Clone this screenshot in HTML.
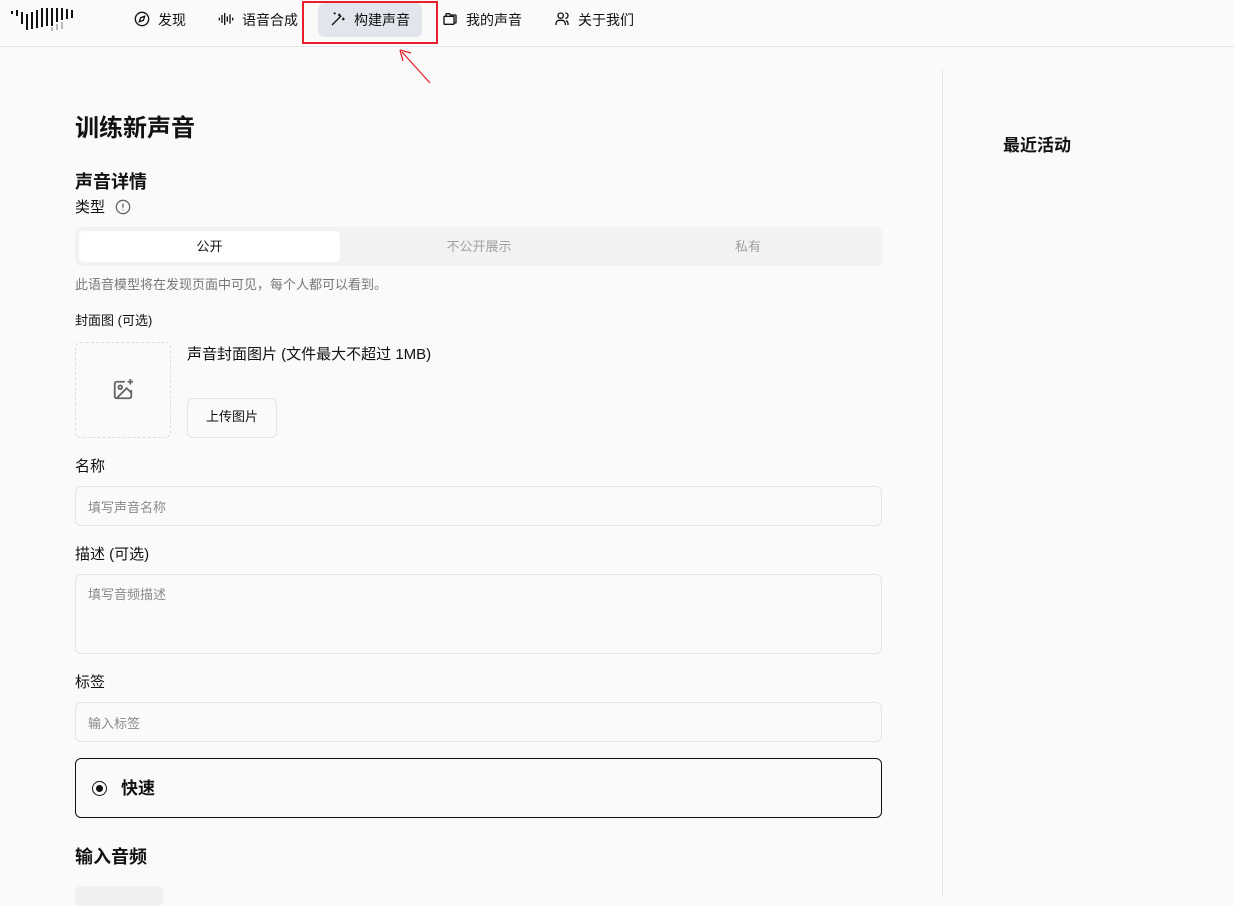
<!DOCTYPE html>
<html><head><meta charset="utf-8"><style>
*{box-sizing:border-box;margin:0;padding:0}
body{width:1234px;height:897px;overflow:hidden;background:#fafafa;font-family:"Liberation Sans","Noto Sans CJK SC",sans-serif;color:#111;position:relative}
.a{position:absolute;white-space:nowrap}
.hdr{position:absolute;left:0;top:0;width:1234px;height:47px;border-bottom:1px solid #e5e5e5;background:#fafafa}
.nav{font-size:14px;top:10px}
.inp{position:absolute;left:75px;width:807px;border:1px solid #e4e4e7;border-radius:6px;background:#fafafa;font-size:13px;color:#8a8a8a;padding:10px 12px}
svg.ic{position:absolute}
</style></head><body>
<div class="hdr"></div>
<svg class="ic" style="left:10px;top:6px" width="68" height="26" viewBox="0 0 68 26">
<g stroke="#111" stroke-width="2">
<line x1="2" y1="5" x2="2" y2="8"/><line x1="7" y1="4" x2="7" y2="10"/><line x1="12" y1="6" x2="12" y2="18"/><line x1="17" y1="8" x2="17" y2="24"/><line x1="22" y1="6" x2="22" y2="23"/><line x1="27" y1="4" x2="27" y2="22"/><line x1="32" y1="2" x2="32" y2="21"/><line x1="37" y1="2" x2="37" y2="20"/><line x1="42" y1="2" x2="42" y2="20"/><line x1="47" y1="2" x2="47" y2="16"/><line x1="52" y1="2" x2="52" y2="14"/><line x1="57" y1="3" x2="57" y2="13"/><line x1="62" y1="4" x2="62" y2="12"/></g>
<g stroke="#bbb" stroke-width="2"><line x1="42" y1="21" x2="42" y2="25"/><line x1="47" y1="18" x2="47" y2="24"/><line x1="52" y1="16" x2="52" y2="23"/></g></svg>
<svg class="ic" style="left:134px;top:11px" width="16" height="16" viewBox="0 0 24 24" fill="none" stroke="#111" stroke-width="2"><circle cx="12" cy="12" r="10"/><path d="M16 8l-2 6-6 2 2-6z"/></svg>
<div class="a nav" style="left:158px">发现</div>
<svg class="ic" style="left:218px;top:11px" width="16" height="16" viewBox="0 0 24 24" fill="none" stroke="#111" stroke-width="2"><path d="M2 10v4M6 6v12M10 3v18M14 8v8M18 5v14M22 10v4"/></svg>
<div class="a nav" style="left:242px">语音合成</div>
<div class="a" style="left:318px;top:3px;width:104px;height:34px;background:#e2e5ec;border-radius:6px"></div>
<svg class="ic" style="left:330px;top:11px" width="16" height="16" viewBox="0 0 24 24" fill="none" stroke="#111" stroke-width="2"><path d="M3 21L17 7M14 4v4M12 6h4M20 10v4M18 12h4M7 2v3M5.5 3.5h3"/></svg>
<div class="a nav" style="left:354px">构建声音</div>
<div class="a" style="left:302px;top:1px;width:136px;height:43px;border:2px solid #e8202a"></div>
<svg class="ic" style="left:395px;top:45px" width="40" height="42"><path d="M35 38L7 7" stroke="#e8202a" stroke-width="1.3"/><path d="M5 5l3 11M5 5l11 3" stroke="#e8202a" stroke-width="1.3" fill="none"/></svg>
<svg class="ic" style="left:442px;top:11px" width="16" height="16" viewBox="0 0 24 24" fill="none" stroke="#111" stroke-width="2"><path d="M6 8V5a1 1 0 011-1h4l2 2h7a1 1 0 011 1v10a1 1 0 01-1 1h-2"/><rect x="3" y="8" width="15" height="12" rx="1"/></svg>
<div class="a nav" style="left:466px">我的声音</div>
<svg class="ic" style="left:554px;top:11px" width="16" height="16" viewBox="0 0 24 24" fill="none" stroke="#111" stroke-width="2"><circle cx="10" cy="7" r="4"/><path d="M3 21v-2a5 5 0 015-5h4a5 5 0 015 5v2M17 3a4 4 0 010 8M21 21v-2a5 5 0 00-3-4.5"/></svg>
<div class="a nav" style="left:578px">关于我们</div>

<div class="a" style="left:942px;top:70px;width:1px;height:827px;background:#e5e5e5"></div>
<div class="a" style="left:1003px;top:131px;font-size:17px;font-weight:bold">最近活动</div>

<div class="a" style="left:75px;top:108px;font-size:24px;font-weight:bold">训练新声音</div>
<div class="a" style="left:75px;top:168px;font-size:18px;font-weight:bold">声音详情</div>
<div class="a" style="left:75px;top:196px;font-size:15px">类型</div>
<svg class="ic" style="left:115px;top:199px" width="16" height="16" viewBox="0 0 24 24" fill="none" stroke="#666" stroke-width="2"><circle cx="12" cy="12" r="10"/><path d="M12 7v6M12 16v1"/></svg>
<div class="a" style="left:75px;top:227px;width:807px;height:39px;background:#f2f2f3;border-radius:6px"></div>
<div class="a" style="left:79px;top:231px;width:261px;height:31px;background:#fff;border-radius:5px;text-align:center;line-height:31px;font-size:13px">公开</div>
<div class="a" style="left:340px;top:231px;width:278px;text-align:center;line-height:31px;font-size:13px;color:#a0a0a0">不公开展示</div>
<div class="a" style="left:618px;top:231px;width:260px;text-align:center;line-height:31px;font-size:13px;color:#a0a0a0">私有</div>
<div class="a" style="left:75px;top:274px;font-size:13px;color:#777">此语音模型将在发现页面中可见，每个人都可以看到。</div>
<div class="a" style="left:75px;top:310px;font-size:13px">封面图 (可选)</div>
<div class="a" style="left:75px;top:342px;width:96px;height:96px;border:1px dashed #ddd;border-radius:6px"></div>
<svg class="ic" style="left:112px;top:379px" width="22" height="22" viewBox="0 0 24 24" fill="none" stroke="#666" stroke-width="2"><path d="M14 3H5a2 2 0 00-2 2v14a2 2 0 002 2h14a2 2 0 002-2v-7"/><path d="M17 3h6M20 0v6"/><circle cx="9" cy="9" r="2"/><path d="M21 15l-5-5L5 21"/></svg>
<div class="a" style="left:187px;top:343px;font-size:15px">声音封面图片 (文件最大不超过 1MB)</div>
<div class="a" style="left:187px;top:398px;width:90px;height:40px;border:1px solid #e4e4e7;border-radius:6px;text-align:center;line-height:36px;font-size:13px">上传图片</div>
<div class="a" style="left:75px;top:455px;font-size:15px">名称</div>
<div class="inp" style="top:486px;height:40px">填写声音名称</div>
<div class="a" style="left:75px;top:543px;font-size:15px">描述 (可选)</div>
<div class="inp" style="top:574px;height:80px;padding-top:9px">填写音频描述</div>
<div class="a" style="left:75px;top:671px;font-size:15px">标签</div>
<div class="inp" style="top:702px;height:40px">输入标签</div>
<div class="a" style="left:75px;top:758px;width:807px;height:60px;border:1px solid #111;border-radius:6px"></div>
<div class="a" style="left:92px;top:781px;width:15px;height:15px;border:1.5px solid #111;border-radius:50%"></div>
<div class="a" style="left:96px;top:785px;width:7px;height:7px;background:#111;border-radius:50%"></div>
<div class="a" style="left:121px;top:774px;font-size:17px;font-weight:bold">快速</div>
<div class="a" style="left:75px;top:843px;font-size:18px;font-weight:bold">输入音频</div>
<div class="a" style="left:75px;top:886px;width:88px;height:20px;background:#f0f0f1;border-radius:6px"></div>
</body></html>
